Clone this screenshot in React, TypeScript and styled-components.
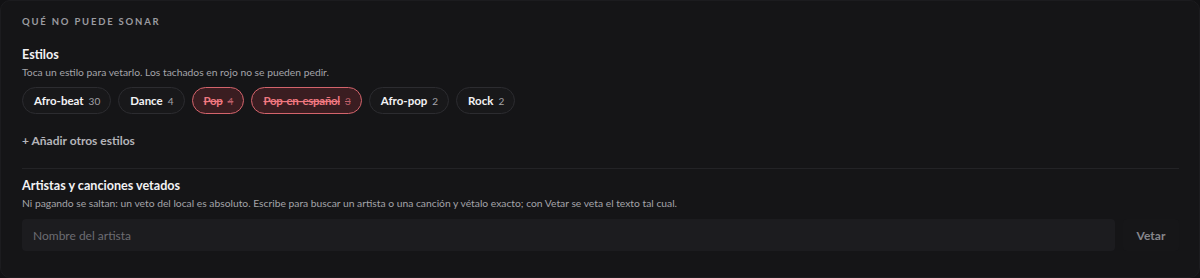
import React from "react";
import styled, { createGlobalStyle } from "styled-components";

const GlobalStyle = createGlobalStyle`
  html, body {
    margin: 0;
    padding: 0;
    background: #121214;
  }
  body {
    font-family: Lato, "Noto Sans", "Liberation Sans", sans-serif;
    -webkit-font-smoothing: antialiased;
  }
`;

type Style = { name: string; count: number; banned?: boolean };

const styles: Style[] = [
  { name: "Afro-beat", count: 30 },
  { name: "Dance", count: 4 },
  { name: "Pop", count: 4, banned: true },
  { name: "Pop-en-español", count: 3, banned: true },
  { name: "Afro-pop", count: 2 },
  { name: "Rock", count: 2 },
];

const App = () => {
  return (
    <>
      <GlobalStyle />
      <Card>
        <Eyebrow>Qué no puede sonar</Eyebrow>

        <Section $top={19}>
          <Title>Estilos</Title>
          <Hint>Toca un estilo para vetarlo. Los tachados en rojo no se pueden pedir.</Hint>
          <ChipRow>
            {styles.map((s) => (
              <Chip key={s.name} $banned={s.banned}>
                <ChipLabel $banned={s.banned}>{s.name}</ChipLabel>
                <ChipCount $banned={s.banned}>{s.count}</ChipCount>
              </Chip>
            ))}
          </ChipRow>
          <AddLink>+ Añadir otros estilos</AddLink>
        </Section>

        <Divider />

        <Section $top={9}>
          <Title>Artistas y canciones vetados</Title>
          <Hint>
            Ni pagando se saltan: un veto del local es absoluto. Escribe para buscar un artista o una canción y vétalo exacto; con Vetar se veta el texto tal cual.
          </Hint>
          <InputRow>
            <SearchInput placeholder="Nombre del artista" />
            <VetoButton>Vetar</VetoButton>
          </InputRow>
        </Section>
      </Card>
    </>
  );
};

const Card = styled.div`
  box-sizing: border-box;
  height: 278px;
  padding: 15px 20px 0 21px;
  background: #151517;
  border: 1px solid #1c1c1f;
  border-radius: 10px;
  display: flex;
  flex-direction: column;
`;

const Eyebrow = styled.div`
  font-size: 9.5px;
  font-weight: 700;
  letter-spacing: 1.8px;
  text-transform: uppercase;
  color: #9b9ba0;
  line-height: 12px;
`;

const Section = styled.div<{ $top: number }>`
  margin-top: ${(p) => p.$top}px;
  display: flex;
  flex-direction: column;
`;

const Title = styled.div`
  font-size: 12.6px;
  font-weight: 700;
  color: #f2f2f4;
  line-height: 16px;
`;

const Hint = styled.div`
  margin-top: 2px;
  font-size: 10.3px;
  color: #a4a4a9;
  line-height: 14px;
`;

const ChipRow = styled.div`
  margin-top: 8px;
  display: flex;
  gap: 7px;
`;

const Chip = styled.button<{ $banned?: boolean }>`
  display: inline-flex;
  align-items: center;
  gap: 5px;
  height: 27px;
  padding: 0 10px 0 11px;
  border-radius: 999px;
  border: 1px solid ${(p) => (p.$banned ? "#d4646c" : "#2c2c30")};
  background: ${(p) => (p.$banned ? "#3a1d21" : "#18181a")};
  font-family: inherit;
  cursor: pointer;
`;

const ChipLabel = styled.span<{ $banned?: boolean }>`
  font-size: 11.5px;
  font-weight: 700;
  letter-spacing: ${(p) => (p.$banned ? "-0.3px" : "0")};
  color: ${(p) => (p.$banned ? "#f07880" : "#f2f2f4")};
  text-decoration: ${(p) => (p.$banned ? "line-through" : "none")};
`;

const ChipCount = styled.span<{ $banned?: boolean }>`
  font-size: 10px;
  color: ${(p) => (p.$banned ? "#c0606a" : "#a4a4a9")};
  text-decoration: ${(p) => (p.$banned ? "line-through" : "none")};
`;

const AddLink = styled.div`
  margin-top: 19px;
  font-size: 12px;
  font-weight: 700;
  color: #b4b4b9;
  line-height: 16px;
`;

const Divider = styled.div`
  margin-top: 19px;
  height: 1px;
  background: #232326;
`;

const InputRow = styled.div`
  margin-top: 9px;
  display: flex;
  gap: 8px;
`;

const SearchInput = styled.input`
  flex: 1;
  height: 32px;
  box-sizing: border-box;
  padding: 0 11px;
  border: none;
  border-radius: 4px;
  background: #1c1c1f;
  font-family: inherit;
  font-size: 12px;
  color: #e0e0e4;
  outline: none;
  &::placeholder {
    color: #6c6c72;
  }
`;

const VetoButton = styled.button`
  width: 56px;
  height: 32px;
  border: none;
  border-radius: 4px;
  background: #161618;
  font-family: inherit;
  font-size: 12px;
  font-weight: 700;
  color: #86868c;
  cursor: pointer;
`;

export default App;
